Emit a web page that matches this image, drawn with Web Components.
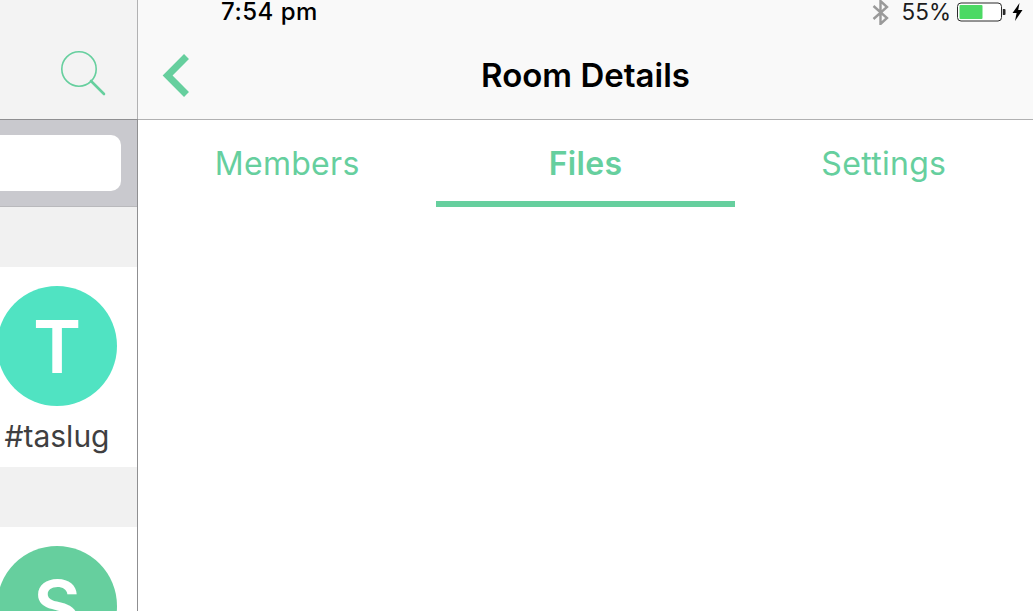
<!DOCTYPE html>
<html>
<head>
<meta charset="utf-8">
<title>Room Details</title>
<style>
  html, body { margin: 0; height: 100%; overflow: hidden; background: #fff; }
  body { font-family: Inter, "Noto Sans", sans-serif; }
  app-shell { height: 611px; }
</style>
</head>
<body>
<app-shell>
  <room-list slot="side">
    <room-item name="#taslug" letter="T" color="#50e3c2"></room-item>
    <room-item name="" letter="S" color="#66cf9e"></room-item>
  </room-list>
  <room-details slot="main"></room-details>
</app-shell>

<script>
// app-shell: sidebar + main column
class AppShell extends HTMLElement {
  constructor() {
    super();
    this.attachShadow({ mode: "open" }).innerHTML = `
      <style>
        :host { display: grid; grid-template-columns: 137px 1px 1fr; overflow: hidden; }
        .rule { background: linear-gradient(#b1b1b2 119px, #8f8f91 119px); }
      </style>
      <slot name="side"></slot>
      <div class="rule"></div>
      <slot name="main"></slot>`;
  }
}

// room-list: search header, search band, rooms
class RoomList extends HTMLElement {
  constructor() {
    super();
    this.attachShadow({ mode: "open" }).innerHTML = `
      <style>
        :host { display: flex; flex-direction: column; background: #f1f1f1; overflow: hidden; height: 611px; }
        .top { height: 119px; flex: none; background: #f3f3f3; display: flex; justify-content: flex-end; align-items: flex-start; box-sizing: border-box; padding: 50px 31px 0 0; }
        .line { height: 1px; flex: none; background: #8f8f91; }
        .band { height: 86px; flex: none; background: #c9c9ce; box-sizing: border-box; padding: 15px 16px 15px 0; }
        .field { height: 56px; background: #fff; border-radius: 0 10px 10px 0; }
        .rooms { display: flex; flex-direction: column; gap: 60px; padding-top: 60px; }
        .band-line { height: 1px; flex: none; background: #b9b9bc; }
        svg { display: block; }
      </style>
      <div class="top">
        <svg width="46" height="46" viewBox="0 0 46 46" fill="none" stroke="#66cf9e">
          <circle cx="19" cy="19" r="17.2" stroke-width="1.6"/>
          <path d="M31 31 L44 44" stroke-width="2.6" stroke-linecap="round"/>
        </svg>
      </div>
      <div class="line"></div>
      <div class="band"><div class="field"></div></div>
      <div class="band-line"></div>
      <div class="rooms"><slot></slot></div>`;
  }
}

// room-item: round avatar with a letter and the room name under it
class RoomItem extends HTMLElement {
  static get observedAttributes() { return ["name", "letter", "color"]; }
  constructor() {
    super();
    this.attachShadow({ mode: "open" });
  }
  connectedCallback() { this.render(); }
  attributeChangedCallback(name, oldValue) { if (oldValue !== null) this.render(); }
  render() {
    const name = this.getAttribute("name") ?? "";
    const letter = this.getAttribute("letter") ?? "?";
    const color = this.getAttribute("color") ?? "#ccc";
    this.shadowRoot.innerHTML = `
      <style>
        :host { display: block; height: 200px; background: #fff; }
        .wrap { width: 114px; padding-top: 19px; display: flex; flex-direction: column; align-items: center; }
        .avatar { flex: none; width: 120px; height: 120px; border-radius: 50%; background: ${color}; color: #fff; display: flex; align-items: center; justify-content: center; font-size: 73px; font-weight: 600; line-height: 1; }
        .name { margin-top: 12px; font-size: 30px; line-height: 36px; color: #3f3f41; white-space: nowrap; }
      </style>
      <div class="wrap">
        <div class="avatar">${letter}</div>
        <div class="name">${name}</div>
      </div>`;
  }
}

// status-bar: the time and the device indicators
class StatusBar extends HTMLElement {
  constructor() {
    super();
    this.attachShadow({ mode: "open" }).innerHTML = `
      <style>
        :host { display: block; height: 24px; color: #000; font-size: 24px; line-height: 24px; }
        .bar { display: flex; align-items: center; height: 24px; padding: 0 10px 0 83px; }
        .time { font-weight: 500; letter-spacing: .5px; white-space: nowrap; }
        .right { margin-left: auto; display: flex; align-items: center; }
        .pct { margin: 0 6px 0 13px; font-size: 22.5px; color: #1c1c1c; }
        svg { display: block; }
      </style>
      <div class="bar">
        <span class="time">7:54 pm</span>
        <span class="right">
          <svg width="17" height="25" viewBox="0 0 17 25" fill="none" stroke="#9a9a9a" stroke-width="2.4">
            <path d="M1.5 6 L15 18 L8.5 24 L8.5 1 L15 7 L1.5 19"/>
          </svg>
          <span class="pct">55%</span>
          <svg width="49" height="20" viewBox="0 0 49 20">
            <rect x="0.5" y="1" width="44" height="18" rx="3.5" fill="#fff" stroke="#2a2a2a" stroke-width="1"/>
            <rect x="2.5" y="3" width="23" height="14" rx="1" fill="#4cd964"/>
            <path d="M45.8 7h1.7a1 1 0 0 1 1 1v4a1 1 0 0 1-1 1h-1.7z" fill="#2a2a2a"/>
          </svg>
          <svg style="margin-left:6px" width="11" height="18" viewBox="0 0 11 18">
            <path d="M7.5 0 L0.5 10 H4.6 L3 18 L10.5 7 H6.2 Z" fill="#000"/>
          </svg>
        </span>
      </div>`;
  }
}

// tab-button: one tab; "active" makes it bold and underlined
class TabButton extends HTMLElement {
  constructor() {
    super();
    this.attachShadow({ mode: "open" }).innerHTML = `
      <style>
        :host { display: flex; flex: 1; box-sizing: border-box; align-items: flex-start; justify-content: center; padding-top: 24px; color: #66cf9e; font-size: 32px; letter-spacing: .3px; line-height: 40px; }
        :host([active]) { font-weight: 600; border-bottom: 6px solid #66cf9e; }
      </style>
      <slot></slot>`;
  }
}

// room-details: right column
class RoomDetails extends HTMLElement {
  constructor() {
    super();
    this.attachShadow({ mode: "open" }).innerHTML = `
      <style>
        :host { display: flex; flex-direction: column; background: #fff; height: 611px; }
        .head { flex: none; height: 120px; box-sizing: border-box; background: #f9f9f9; border-bottom: 1px solid #b1b1b2; }
        .nav { height: 95px; display: grid; grid-template-columns: 1fr auto 1fr; align-items: center; }
        .nav h1 { margin: 0; font-size: 33px; font-weight: 600; line-height: 40px; color: #000; white-space: nowrap; padding-top: 6px; }
        .back { padding: 8px 0 0 24px; }
        .tabs { display: flex; height: 87px; }
        svg { display: block; }
      </style>
      <div class="head">
        <status-bar></status-bar>
        <div class="nav">
          <div class="back">
            <svg width="28" height="44" viewBox="0 0 28 44" fill="none" stroke="#66cf9e" stroke-width="7">
              <path d="M24.5 2.5 L5.6 21.5 L24.5 40.5"/>
            </svg>
          </div>
          <h1>Room Details</h1>
        </div>
      </div>
      <div class="tabs">
        <tab-button>Members</tab-button>
        <tab-button active>Files</tab-button>
        <tab-button>Settings</tab-button>
      </div>`;
  }
}

customElements.define("app-shell", AppShell);
customElements.define("room-list", RoomList);
customElements.define("room-item", RoomItem);
customElements.define("status-bar", StatusBar);
customElements.define("tab-button", TabButton);
customElements.define("room-details", RoomDetails);
</script>
</body>
</html>
